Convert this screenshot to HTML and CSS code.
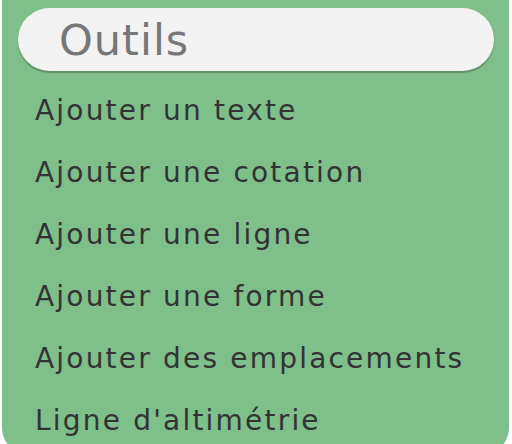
FILE: index.html
```html
<!DOCTYPE html>
<html lang="fr">
<head>
<meta charset="utf-8">
<link rel="stylesheet" href="styles.css">
</head>
<body>
<div class="panel">
  <div class="search">Outils</div>
  <ul class="tools">
    <li>Ajouter un texte</li>
    <li>Ajouter une cotation</li>
    <li>Ajouter une ligne</li>
    <li>Ajouter une forme</li>
    <li>Ajouter des emplacements</li>
    <li>Ligne d'altimétrie</li>
  </ul>
</div>
</body>
</html>
```
FILE: styles.css
```css
html, body {
  margin: 0;
  padding: 0;
  background: #ffffff;
  overflow: hidden;
  height: 444px;
}
.panel {
  margin-left: 2px;
  width: 507px;
  height: 454px;
  box-sizing: border-box;
  background: #7ebf8a;
  border-radius: 0 0 26px 26px;
  padding: 8px 15px 0 16px;
  font-family: "DejaVu Sans", sans-serif;
}
.search {
  height: 63px;
  border-radius: 32px;
  background: #f2f2f2;
  box-shadow: 0 2px 1px rgba(0, 0, 0, 0.25);
  padding-left: 41px;
  display: flex;
  align-items: center;
  font-size: 43px;
  color: #777777;
  letter-spacing: 1px;
}
.tools {
  list-style: none;
  margin: 9px 0 0 0;
  padding: 0 0 0 17px;
}
.tools li {
  height: 62px;
  line-height: 62px;
  font-size: 28px;
  color: #333333;
  letter-spacing: 2.2px;
}
```
